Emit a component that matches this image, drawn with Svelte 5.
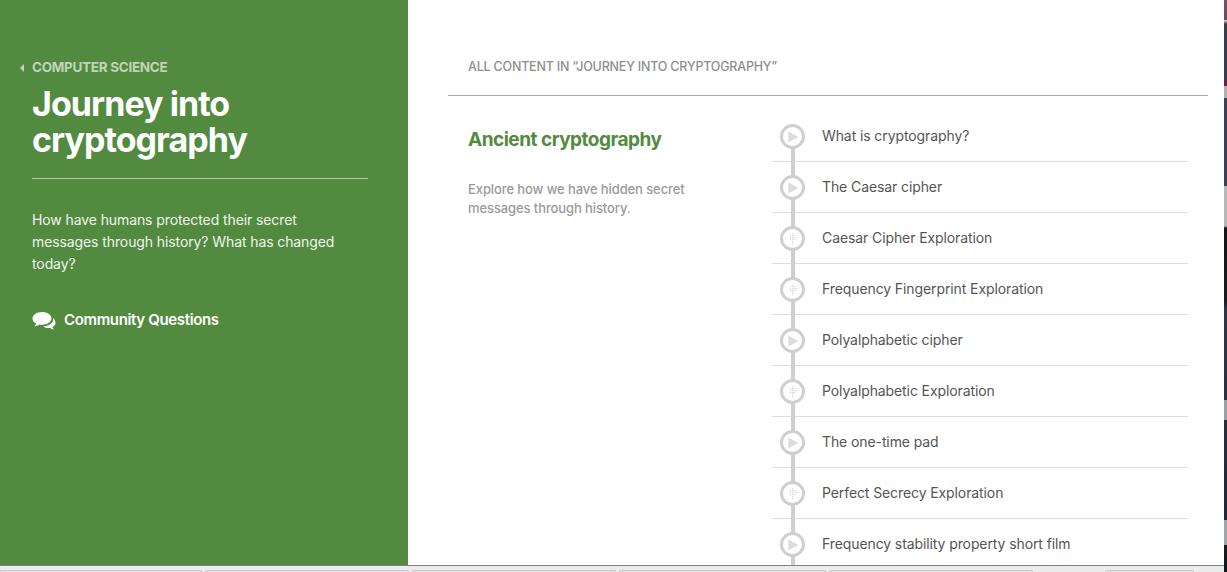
<script>
  const items = [
    ['What is cryptography?', 'v'],
    ['The Caesar cipher', 'v'],
    ['Caesar Cipher Exploration', 'e'],
    ['Frequency Fingerprint Exploration', 'e'],
    ['Polyalphabetic cipher', 'v'],
    ['Polyalphabetic Exploration', 'e'],
    ['The one-time pad', 'v'],
    ['Perfect Secrecy Exploration', 'e'],
    ['Frequency stability property short film', 'v']
  ];
  const dots = [[0,0],[0,2],[0,4],[0,6],[0,8],[0,10],[-2,2],[-2,4],[-2,6],[2,2],[2,4],[2,6],[4,4]];
  const tabs = [202, 204, 204, 207, 204];
</script>

<div class="screen">
  <div class="left">
    <div class="page">
      <aside class="side">
        <a class="crumb"><span class="caret"></span>COMPUTER SCIENCE</a>
        <h1>Journey into cryptography</h1>
        <hr />
        <p>How have humans protected their secret messages through history? What has changed today?</p>
        <a class="cq">
          <svg viewBox="0 0 24 20" width="24" height="20">
            <path fill="#fff" d="M10 1C4.800 1 .5 3.900.5 7.500c0 2.100 1.400 3.900 3.600 5.100-.3 1-.9 1.900-1.700 2.700 1.800-.2 3.500-.9 4.800-1.900.9.2 1.800.3 2.800.3 5.200 0 9.500-2.900 9.500-6.500S15.200 1 10 1z"/>
            <path fill="#fff" d="M21 6.800c.2.500.3 1 .3 1.500 0 3.900-4.500 7-10 7.100 1.300 1.100 3.200 1.700 5.200 1.700.5 0 1 0 1.500-.1 1.100.9 2.500 1.400 4 1.500-.6-.7-1.100-1.400-1.400-2.300 1.700-1 2.900-2.500 2.900-4.200 0-2-1-3.800-2.500-5.200z"/>
          </svg>
          <span>Community Questions</span>
        </a>
      </aside>
      <main class="main">
        <header class="allhead"><span>ALL CONTENT IN “JOURNEY INTO CRYPTOGRAPHY”</span></header>
        <section class="topic">
          <div class="intro">
            <h2>Ancient cryptography</h2>
            <p>Explore how we have hidden secret messages through history.</p>
          </div>
          <ul class="list">
            {#each items as [label, kind], i}
              <li class="row">
                <span class="line" class:first={i === 0}></span>
                <span class="node">
                  {#if kind === 'v'}
                    <svg viewBox="0 0 14 14" width="12" height="12"><path fill="#dcdcdc" d="M1.500 0.500 13.500 7 1.500 13.500z"/></svg>
                  {:else}
                    <svg viewBox="-4 -1 10 13" width="10" height="13">
                      {#each dots as [x, y]}<rect x={x} y={y} width="1.200" height="1.200" fill="#d4d4d4"/>{/each}
                    </svg>
                  {/if}
                </span>
                <span class="label">{label}</span>
              </li>
            {/each}
          </ul>
        </section>
      </main>
    </div>
    <div class="taskbar">
      {#each tabs as w}<span class="tab" style="width:{w}px"></span>{/each}
      <span class="tab far"></span>
    </div>
  </div>
  <div class="strip"></div>
</div>

<style>
  :global(body) { margin: 0; background: #ececec; font-family: "Inter", "Lato", sans-serif; overflow: hidden; }
  .screen { display: flex; height: 572px; overflow: hidden; }
  .left { flex: 1; min-width: 0; display: flex; flex-direction: column; }
  .page { height: 565px; display: flex; background: #fff; overflow: hidden; box-shadow: 0 1px 0 #808080; }
  .strip { width: 3px; flex: none; background: linear-gradient(180deg, #7a5060 0, #6a4a5c 20px, #e0e0e0 20px, #3c3c50 24px, #3c3c50 80px, #6a1f4a 80px, #6a1f4a 86px, #b5b0b0 86px, #b5b0b0 98px, #3e3e58 98px, #3e3e58 186px, #b8b8b8 186px, #b8b8b8 226px, #14141c 228px, #1a1a22 300px, #30344c 310px, #2c2e44 400px, #9aa0a8 400px, #9aa0a8 420px, #2a2c40 420px, #22243a 520px, #a0a4a8 520px, #a0a4a8 545px, #1a1a22 545px, #14141c 100%); }
  .side { width: 408px; box-sizing: border-box; background: #528a40; padding: 59px 40px 0 32px; color: #fff; flex: none; }
  .crumb { display: block; position: relative; font-size: 13.500px; font-weight: 700; line-height: 17px; color: #c0d4b8; letter-spacing: -0.3px; }
  .caret { position: absolute; left: -12px; top: 5px; border-style: solid; border-width: 4px 4px 4px 0; border-color: transparent #c0d4b8 transparent transparent; }
  h1 { margin: 10px 0 0; font-size: 34px; line-height: 36px; font-weight: 700; letter-spacing: -0.95px; }
  hr { margin: 20px 0 0; border: 0; border-top: 1px solid #b4cbaa; }
  .side p { margin: 30px 0 0; font-size: 14px; line-height: 22px; color: #f0f5ee; font-weight: 400; max-width: 310px; letter-spacing: -0.1px; }
  .cq { display: flex; align-items: center; gap: 8px; margin-top: 33px; font-size: 15px; font-weight: 600; letter-spacing: -0.35px; }
  .cq svg { margin-top: 3px; }
  .main { flex: 1; min-width: 0; padding: 0 16px 0 40px; }
  .allhead { height: 96px; box-sizing: border-box; padding: 59px 0 0 20px; border-bottom: 1px solid #a8a8a8; font-size: 12.500px; line-height: 15px; color: #8e8e8e; font-weight: 500; letter-spacing: -0.2px; }
  .topic { display: flex; }
  .intro { width: 324px; box-sizing: border-box; padding: 32px 40px 0 20px; flex: none; }
  h2 { margin: 0; font-size: 19px; line-height: 24px; font-weight: 700; color: #528a40; letter-spacing: -0.5px; }
  .intro p { margin: 28px 0 0; font-size: 13px; line-height: 19px; color: #9a9a9a; font-weight: 500; letter-spacing: -0.1px; }
  .list { list-style: none; margin: 15px 0 0; padding: 0; width: 416px; }
  .row { position: relative; display: flex; align-items: center; height: 50px; margin-bottom: 1px; padding: 0 0 2px 50px; box-sizing: border-box; font-size: 14px; color: #555; letter-spacing: -0.1px; }
  .row::after { content: ""; position: absolute; left: 0; right: 0; bottom: -1px; height: 1px; background: #dedede; }
  .line { position: absolute; left: 19px; top: 0; bottom: -1px; width: 4px; background: #cfcfcf; z-index: 1; }
  .line.first { top: 25px; }
  .node { position: absolute; left: 8px; top: 13px; width: 25px; height: 25px; box-sizing: border-box; border: 3px solid #cfcfcf; border-radius: 50%; background: #fff; display: flex; align-items: center; justify-content: center; z-index: 2; }
  .taskbar { display: flex; gap: 3px; height: 7px; align-items: flex-end; overflow: hidden; }
  .tab { height: 2px; border: 1px solid #c8c8c8; border-bottom: 0; background: #e4e4e4; box-sizing: border-box; border-radius: 2px 2px 0 0; flex: none; }
  .tab.far { width: 89px; margin-left: 69px; }
</style>
